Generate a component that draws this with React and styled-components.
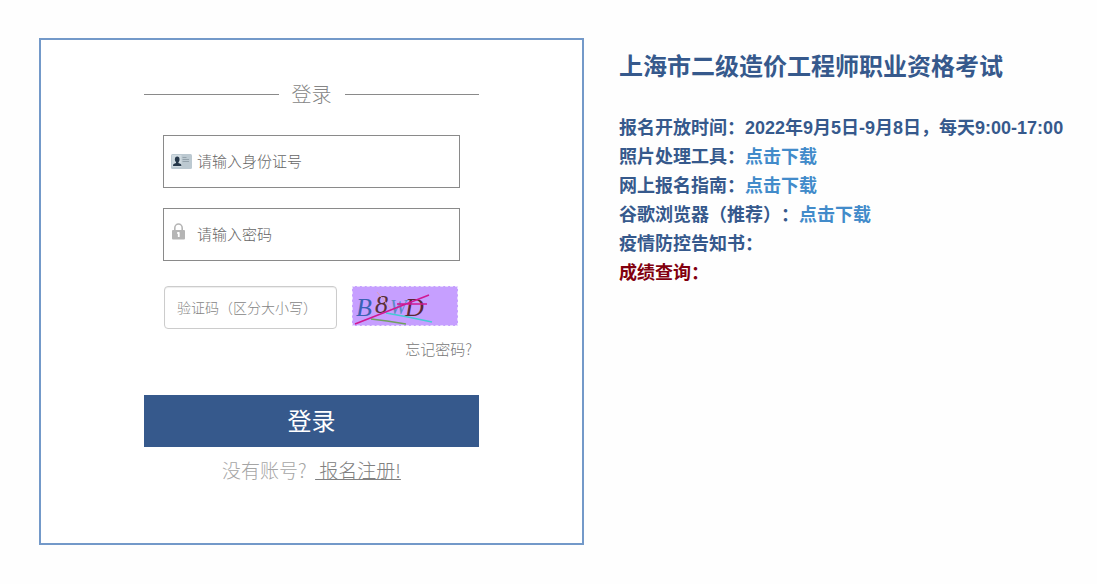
import React, { useState } from 'react'
import styled, { createGlobalStyle } from 'styled-components'

const GlobalStyle = createGlobalStyle`
  * {
    box-sizing: border-box;
  }

  body {
    margin: 0;
    background-color: #fefefe;
    font-family: "Liberation Sans", "Noto Sans CJK SC", sans-serif;
    text-spacing-trim: space-all;
  }

  input, button {
    font-family: inherit;
  }`

const infoItems = [
    { label: "报名开放时间：", text: "2022年9月5日-9月8日，每天9:00-17:00" },
    { label: "照片处理工具：", link: "点击下载" },
    { label: "网上报名指南：", link: "点击下载" },
    { label: "谷歌浏览器（推荐）：", link: "点击下载" },
    { label: "疫情防控告知书：" },
    { label: "成绩查询：", alert: true },
]

const Page = styled.main`
  display: flex;
  align-items: flex-start;
  gap: 35px;
  padding: 38px 16px 38px 39px;

  @media (max-width: 900px) {
    flex-direction: column;
    padding: 20px;
  }`

const LoginPanel = styled.section`
  flex: 0 1 auto;
  width: 100%;
  max-width: 545px;
  padding: 39px 20px 59px;
  border: 2px solid #7399c9;
  background-color: white;`

const LoginForm = styled.form`
  display: flex;
  flex-direction: column;
  max-width: 335px;
  margin: 0 auto;
  font-family: "Noto Sans CJK SC", sans-serif;`

const FormTitle = styled.h2`
  display: flex;
  align-items: center;
  gap: 13px;
  margin: 0 0 26px;
  color: #858585;
  font-size: 20px;
  font-weight: 300;
  line-height: 30px;

  &::before, &::after {
    content: "";
    flex: 1;
    height: 1px;
    background-color: #8a8a8a;
  }`

const Fields = styled.div`
  display: flex;
  flex-direction: column;
  gap: 20px;
  padding: 0 19px;`

const Field = styled.label`
  display: flex;
  align-items: center;
  height: 53px;
  padding-left: 7px;
  border: 1px solid #8a8a8a;`

const IconBox = styled.span`
  display: flex;
  flex: 0 0 26px;
  height: 24px;
  align-items: ${({ $top }) => $top ? "flex-start" : "center"};`

const FieldInput = styled.input`
  flex: 1;
  min-width: 0;
  height: 100%;
  padding: 0 0 2px;
  border: none;
  outline: none;
  background: none;
  color: #555;
  font-size: 15px;
  font-weight: 300;

  &::placeholder {
    color: #666;
  }`

const CaptchaRow = styled.div`
  display: flex;
  align-items: flex-start;
  gap: 15px;
  padding: 25px 20px 0;`

const CaptchaInput = styled.input`
  flex: 0 1 173px;
  min-width: 0;
  height: 43px;
  padding: 0 12px 2px;
  border: 1px solid #ccc;
  border-radius: 4px;
  box-shadow: inset 0 1px 1px rgba(0, 0, 0, 0.075);
  color: #555;
  font-size: 14px;
  font-weight: 300;

  &::placeholder {
    color: #858585;
  }`

const CaptchaButton = styled.button`
  display: flex;
  padding: 0;
  border: 1px dashed #e8dcff;
  background-color: #c69fff;
  cursor: pointer;`

const ForgotLink = styled.a`
  align-self: flex-end;
  margin: 9px 7px 0 0;
  color: #777;
  font-size: 15px;
  font-weight: 300;
  line-height: 22px;
  text-decoration: none;`

const SubmitButton = styled.button`
  height: 52px;
  margin-top: 35px;
  padding: 0 0 4px;
  border: none;
  background-color: #36598c;
  color: white;
  font-size: 24px;
  cursor: pointer;`

const Register = styled.p`
  margin: 9px 0 0;
  color: #a5a5a5;
  font-size: 19px;
  font-weight: 300;
  line-height: 28px;
  text-align: center;
  white-space: pre;`

const RegisterLink = styled.a`
  color: #808080;`

const Info = styled.section`
  flex: 1 1 0;
  color: #36598c;
  font-weight: bold;`

const InfoTitle = styled.h1`
  margin: 11px 0 29px;
  font-size: 24px;
  line-height: 36px;`

const InfoList = styled.ul`
  margin: 0;
  padding: 0;
  list-style: none;`

const InfoItem = styled.li`
  color: ${({ $alert }) => $alert ? "#82000f" : "inherit"};
  font-size: 18px;
  line-height: 29px;`

const InfoLink = styled.a`
  color: #428bca;
  text-decoration: none;`

const IdCardIcon = () => (
    <svg width="21" height="15" viewBox="0 0 21 15" aria-hidden="true">
        <rect width="21" height="15" rx="1.5" fill="#bcc9d1"/>
        <rect x="1" y="1" width="9.5" height="12" fill="#cfdae0"/>
        <ellipse cx="6.2" cy="5.4" rx="2.3" ry="2.8" fill="#26384a"/>
        <path d="M5 7h2.4v2l2.4 1q.6.3.6 2H2q0-1.7.6-2L5 9z" fill="#26384a"/>
        <path d="M11.5 3.5h4M11.5 5.5h6.5M11.5 7.5h6.5" stroke="#94a2ab"/>
    </svg>
)

const LockIcon = () => (
    <svg width="15" height="17" viewBox="0 0 15 17" aria-hidden="true">
        <path d="M3.8 8V5a3.7 4 0 0 1 7.4 0v3" fill="none" stroke="#b5b5b5" strokeWidth="1.6"/>
        <rect x="1" y="7" width="13" height="9.5" rx="1" fill="#b5b5b5"/>
        <path d="M6 10h2v4M7.5 9v5" fill="none" stroke="white" strokeWidth="1.3"/>
    </svg>
)

const CaptchaImage = () => (
    <svg width="104" height="38" viewBox="0 0 104 38" role="img" aria-label="验证码">
        <g fontFamily="Liberation Serif, serif" fontStyle="italic" fontSize="26">
            <text x="3" y="29" fill="#3b62b5">B</text>
            <text x="22" y="26" fill="#5a3038">8</text>
            <text x="37" y="27" fill="#5c8ac4" fontSize="20">W</text>
            <text x="52" y="29" fill="#5b2634">D</text>
        </g>
        <path d="M24 5l14 17" fill="none" stroke="#dda0b8"/>
        <path d="M18 32l16 2 19 3" fill="none" stroke="#70a060" strokeWidth="1.5"/>
        <path d="M33 26l22 4 24 5" fill="none" stroke="#45cbd5" strokeWidth="1.5"/>
        <path d="M2 37L76 8M44 17h30" fill="none" stroke="#d01893" strokeWidth="1.5"/>
    </svg>
)

const App = () => {

    const [form, setForm] = useState({ idNumber: "", password: "", captcha: "" })

    const changeField = (e) => {
        setForm({ ...form, [e.target.name]: e.target.value })
    };

    return (
        <>
            <GlobalStyle/>
            <Page>
                <LoginPanel>
                    <LoginForm onSubmit={(e) => e.preventDefault()}>
                        <FormTitle>登录</FormTitle>
                        <Fields>
                            <Field>
                                <IconBox><IdCardIcon/></IconBox>
                                <FieldInput
                                    name="idNumber"
                                    aria-label="请输入身份证号"
                                    placeholder="请输入身份证号"
                                    value={form.idNumber}
                                    onChange={changeField}
                                />
                            </Field>
                            <Field>
                                <IconBox $top><LockIcon/></IconBox>
                                <FieldInput
                                    type="password"
                                    name="password"
                                    aria-label="请输入密码"
                                    placeholder="请输入密码"
                                    value={form.password}
                                    onChange={changeField}
                                />
                            </Field>
                        </Fields>
                        <CaptchaRow>
                            <CaptchaInput
                                name="captcha"
                                aria-label="验证码（区分大小写）"
                                placeholder="验证码（区分大小写）"
                                value={form.captcha}
                                onChange={changeField}
                            />
                            <CaptchaButton type="button">
                                <CaptchaImage/>
                            </CaptchaButton>
                        </CaptchaRow>
                        <ForgotLink href="#forgot">忘记密码?</ForgotLink>
                        <SubmitButton type="submit">登录</SubmitButton>
                        <Register>没有账号?  <RegisterLink href="#register"> 报名注册!</RegisterLink></Register>
                    </LoginForm>
                </LoginPanel>
                <Info>
                    <InfoTitle>上海市二级造价工程师职业资格考试</InfoTitle>
                    <InfoList>
                        {infoItems.map(({ label, text, link, alert }) => (
                            <InfoItem key={label} $alert={alert}>
                                {label}{text}
                                {link && <InfoLink href="#download">{link}</InfoLink>}
                            </InfoItem>
                        ))}
                    </InfoList>
                </Info>
            </Page>
        </>
    );
};

export default App;
